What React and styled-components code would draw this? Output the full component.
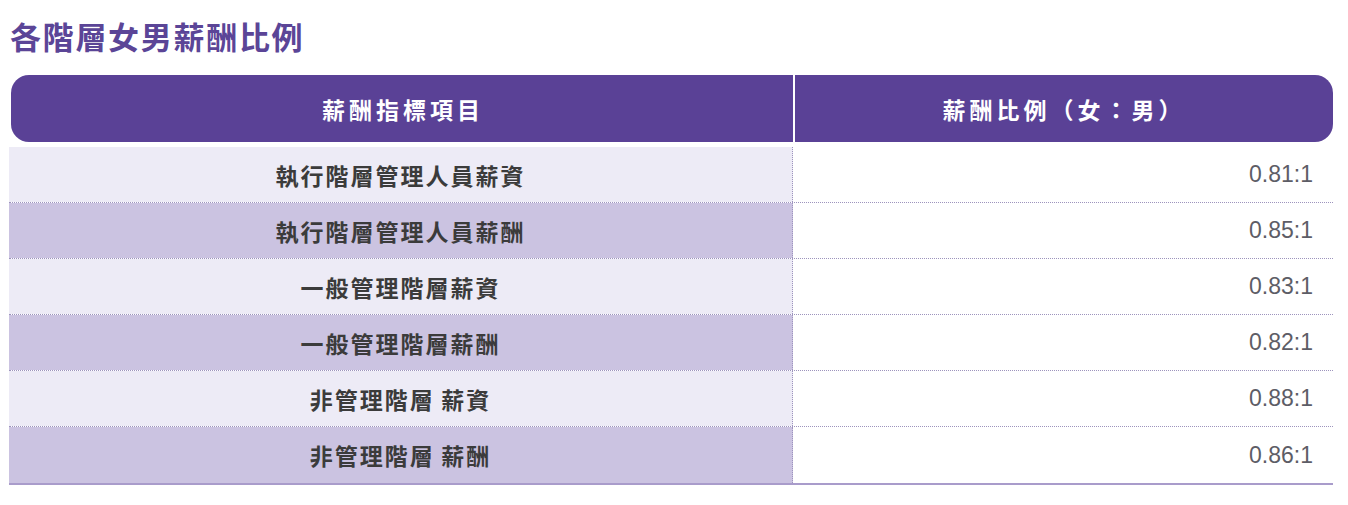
import React from "react";
import styled, { createGlobalStyle } from "styled-components";

const Global = createGlobalStyle`
  html, body { margin: 0; padding: 0; background: #ffffff; }
  body { font-family: "Noto Sans CJK TC", "Noto Sans", sans-serif; }
`;

const Page = styled.div`
  width: 1348px;
  height: 505px;
  padding: 16px 0 0 9px;
  box-sizing: border-box;
`;

const Title = styled.h2`
  margin: 0 0 0 1px;
  font-family: "Noto Sans CJK TC", sans-serif;
  font-size: 31px;
  line-height: 40px;
  font-weight: 700;
  letter-spacing: 1.7px;
  color: #5b4597;
`;

const Table = styled.div`
  width: 1324px;
  margin-top: 19px;
`;

const Header = styled.div`
  display: grid;
  grid-template-columns: 782px 2px 1fr;
  height: 67px;
  margin-left: 2px;
  background: #5a4196;
  border-radius: 18px;
  overflow: hidden;
`;

const HeadCell = styled.div`
  display: flex;
  align-items: center;
  justify-content: center;
  color: #ffffff;
  font-size: 23px;
  font-weight: 700;
  letter-spacing: ${(p) => p.$spacing || "4px"};
  padding-left: ${(p) => p.$shift || "0px"};
`;

const HeadDivider = styled.div`
  background: #ffffff;
`;

const Body = styled.div`
  margin-top: 5px;
  border-bottom: 2px solid #a99ccb;
`;

const Row = styled.div`
  display: grid;
  grid-template-columns: 784px 1fr;
  height: 56px;
  box-sizing: border-box;
  border-bottom: ${(p) => (p.$last ? "none" : "1px dotted #9d94bd")};
`;

const Label = styled.div`
  display: flex;
  align-items: center;
  justify-content: center;
  background: ${(p) => (p.$dark ? "#cbc3e1" : "#edebf6")};
  border-right: 1px dotted #9d94bd;
  color: #3b3b3b;
  font-size: 23px;
  font-weight: 700;
  letter-spacing: 2px;
  white-space: pre;
`;

const Value = styled.div`
  display: flex;
  align-items: center;
  justify-content: flex-end;
  padding-right: 20px;
  font-family: "Liberation Sans", Arial, sans-serif;
  font-size: 23px;
  color: #5d5d66;
  background: #ffffff;
`;

const rows = [
  ["執行階層管理人員薪資", "0.81:1"],
  ["執行階層管理人員薪酬", "0.85:1"],
  ["一般管理階層薪資", "0.83:1"],
  ["一般管理階層薪酬", "0.82:1"],
  ["非管理階層\u2009薪資", "0.88:1"],
  ["非管理階層\u2009薪酬", "0.86:1"],
];

export default function App() {
  return (
    <Page>
      <Global />
      <Title>各階層女男薪酬比例</Title>
      <Table>
        <Header>
          <HeadCell $shift="2px">薪酬指標項目</HeadCell>
          <HeadDivider />
          <HeadCell $spacing="4px">薪酬比例（女：男）</HeadCell>
        </Header>
        <Body>
          {rows.map(([label, value], i) => (
            <Row key={label} $last={i === rows.length - 1}>
              <Label $dark={i % 2 === 1}>{label}</Label>
              <Value>{value}</Value>
            </Row>
          ))}
        </Body>
      </Table>
    </Page>
  );
}
